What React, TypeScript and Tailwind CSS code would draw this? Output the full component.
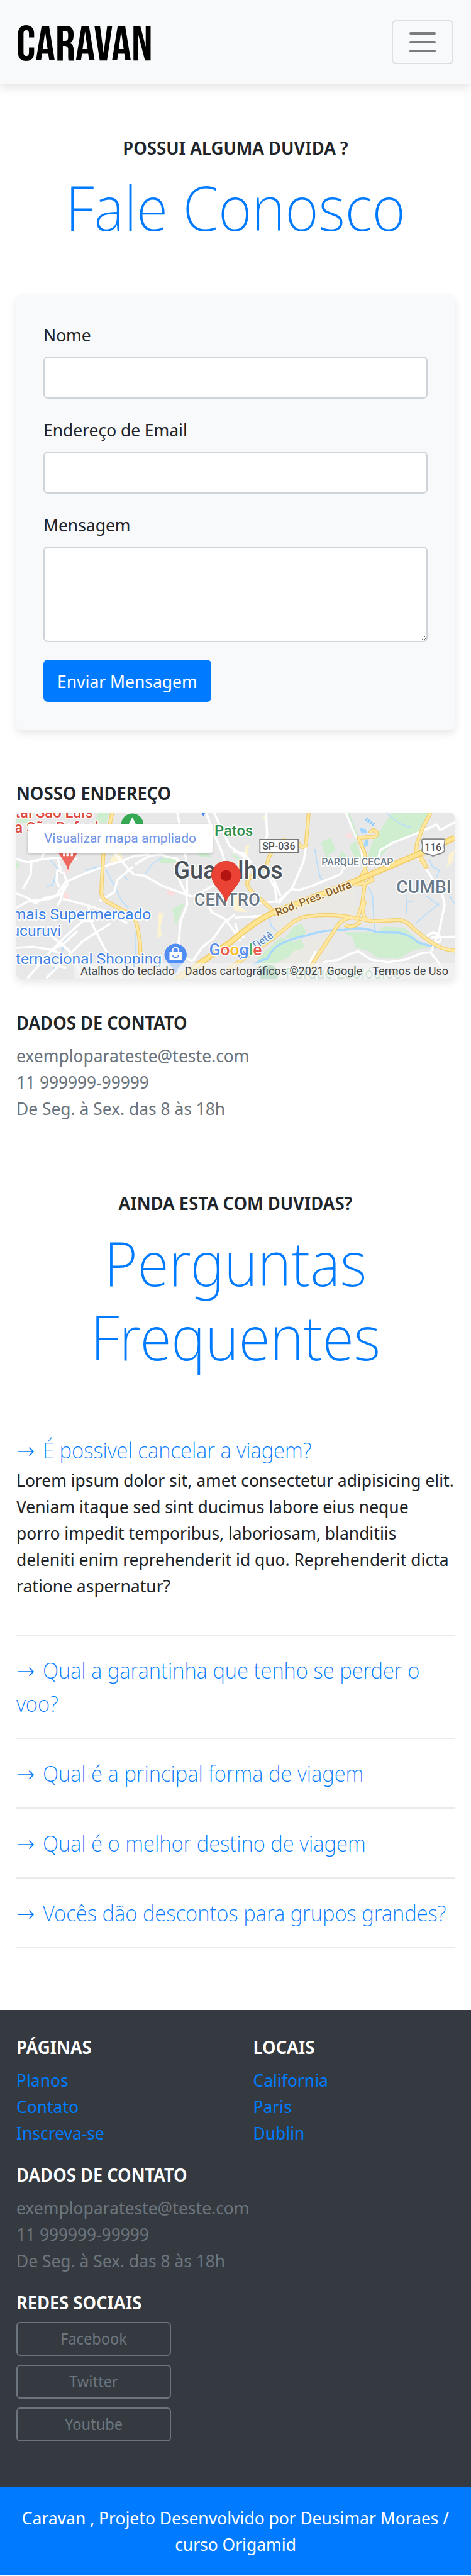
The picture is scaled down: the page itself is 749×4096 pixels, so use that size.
import { useState } from "react";

const contactLines = ["exemploparateste@teste.com", "11 999999-99999", "De Seg. à Sex. das 8 às 18h"];

const questions = [
  {
    title: "É possivel cancelar a viagem?",
    answer:
      "Lorem ipsum dolor sit, amet consectetur adipisicing elit. Veniam itaque sed sint ducimus labore eius neque porro impedit temporibus, laboriosam, blanditiis deleniti enim reprehenderit id quo. Reprehenderit dicta ratione aspernatur?",
  },
  { title: "Qual a garantinha que tenho se perder o voo?" },
  { title: "Qual é a principal forma de viagem" },
  { title: "Qual é o melhor destino de viagem" },
  { title: "Vocês dão descontos para grupos grandes?" },
];

const whiteRoads = [
  "M0 84 L20 90 L50 84 L74 82 L110 84",
  "M46 82 L50 72 M27 90 L26 112 L12 138",
  "M0 146 L20 154 L34 164 L52 154 L72 150 L88 126 L120 112 L156 98 L190 88 L214 78 L240 76",
  "M0 172 L22 160 L60 156 L82 146 L92 130 L86 110 L74 104 L72 124 L78 134",
  "M74 82 L80 104 M86 130 L80 158 L74 168",
  "M84 156 L130 168 L160 178 L200 200",
  "M130 168 L134 196 L156 240 L190 299",
  "M210 98 L182 122 L176 144 L150 160",
  "M176 72 L200 100 L212 112 L230 114 L262 132 L300 146 L318 152",
  "M214 94 L240 78 L262 76",
  "M200 0 L216 20 L244 66 L270 80 L292 84",
  "M290 84 L292 118 L306 148 L308 166 L296 196 L292 240 L300 262 L318 268",
  "M318 152 L362 128 M308 150 L306 84 L290 0",
  "M318 268 L334 244 L356 226 L374 200 L394 184",
  "M346 164 L352 180 L376 192 L394 216 L404 232",
  "M342 0 L352 30 L370 70 L382 110",
  "M356 0 L384 60 L410 80 L412 110",
  "M0 244 L30 242 L64 248 L120 272 L160 290",
  "M0 272 L30 270 L62 274 L90 280",
  "M20 299 L62 250 L90 222 L120 196 L140 196",
  "M54 299 L92 260 L120 232 L170 200",
  "M60 220 L96 250 L120 299 M110 214 L86 236 L64 248",
  "M450 0 L452 40 L448 60 M390 70 L410 74 L424 92",
  "M522 62 L518 88 L500 130 L496 138 L476 156 L474 166",
  "M496 138 L510 140 L534 132 L584 112 L590 100 L612 88",
  "M460 112 L476 150 M450 108 L466 136 L470 164 M416 166 L476 160 L496 138",
  "M394 190 L420 188 L462 186 M394 200 L402 224 L412 224",
  "M594 0 L606 30 L622 60 L624 92",
  "M790 18 L764 32 L758 22 L740 30 L722 38 L680 54 L656 68 L652 84",
  "M724 82 L744 110 L768 150 L772 166 L762 214 L748 250",
  "M748 226 L790 224 M740 224 q12 -14 24 0 q4 12 -12 12",
  "M552 270 L580 266 L600 256 L616 250 L640 266 L670 270 L700 266 L730 254 L746 252 L762 272 L776 299",
  "M528 272 L540 250",
];

const waterLines = [
  "M162 104 L180 140 L190 160 L202 172 M202 124 L192 112",
  "M66 126 L76 104 L60 84 M76 108 L66 130 L54 134",
  "M124 104 L150 98 L160 98 M232 112 L244 94 L262 82",
  "M214 216 L214 240 L216 260 M122 194 L90 220 L80 262 L56 299",
  "M538 66 L542 92 L548 118 L556 126 M634 134 L642 150 L644 190 L646 214",
  "M702 146 L704 184 M702 160 L716 160 M762 164 L720 200 M738 150 L762 168",
  "M744 84 L750 98 L762 104 L758 116",
  "M454 186 L460 206 L470 214 M666 0 L690 20 L712 28",
  "M780 150 L790 164",
];

const majorRoads = [
  "M173 0 L166 34 L157 71 L153 144 Q154 156 163 161 L197 179 Q214 188 217 201 L223 234 L225 299",
  "M527 0 L522 58 Q520 64 513 62 L507 54 M486 48 L480 50",
  "M460 72 Q452 84 452 98 Q430 106 418 122 Q412 130 424 142 L464 178",
  "M747 0 L733 27 L722 56 L720 74 Q734 82 738 98 L728 84",
  "M638 38 a6 6 0 1 1 4 6 L617 46 L628 74 L628 104 L642 122 L630 128 L610 130",
  "M628 104 L620 118 L628 130 L623 167 L613 196 M628 160 Q620 190 634 194",
  "M523 299 L533 274 L577 207 Q586 192 604 190 M592 203 q14 8 28 -6",
  "M380 284 L463 227 L500 197 Q516 187 533 187 Q560 183 590 187 L620 192 Q640 197 652 196 L690 194 Q704 196 713 207 Q730 222 743 231 Q766 248 790 249",
];

function MapDrawing() {
  return (
    <svg viewBox="0 0 790 300" preserveAspectRatio="xMidYMid slice" className="block h-full w-full" role="img" aria-label="Mapa de Guarulhos">
      <rect width="790" height="300" fill="#e8e8e8" />
      <path d="M463 200 L500 160 L606 130 L620 190 L520 190 L470 224z M440 290 L480 240 L560 222 L570 240 L540 299 L440 299z" fill="#ebe9e3" />
      <g fill="#ceeecf">
        <path d="M677 0 H746 L733 30 L723 36 L677 57 L652 84 L632 84 L643 50 L657 31z" />
        <path d="M549 54 L566 46 L576 68 L560 78 L580 82 L586 68 L598 84 L570 84 L558 80z" />
        <path d="M600 62 L612 52 L624 84 L612 84z" />
        <path d="M148 0 H168 L162 20 L140 20z" />
        <path d="M0 14 L20 10 L28 18 L0 20z M0 90 L6 94 L2 102 L0 102z" />
        <path d="M258 86 L270 80 L292 86 L290 92 L258 92z M326 74 L344 74 L352 80 L334 80z M384 72 L400 80 L410 92 L396 84z" />
        <path d="M281 174 L304 162 L288 204z" />
        <path d="M500 206 L514 200 L522 216 L516 226 L484 228z" />
        <path d="M590 216 L650 216 L662 206 L700 208 L726 232 L742 244 L716 248 L690 264 L650 262 L636 250 L612 244 L606 226z" />
        <path d="M436 262 L476 226 L500 234 L512 228 L520 244 L500 250 L490 262 L470 270 L462 290 L430 290z" />
      </g>
      <g fill="#fdf3d2">
        <path d="M176 74 L188 74 L194 88 L180 92 L168 90z M414 60 L420 58 L416 82 L408 82z M386 160 L398 150 L404 170 L416 180 L394 178z" />
        <path d="M256 182 L266 180 L260 206 L262 224 L254 226z M780 74 L790 68 L786 90 L776 98z M444 8 L450 4 L450 18z" />
      </g>
      <g fill="#fbdedd">
        <path d="M86 104 L98 102 L96 108 L88 110z M86 144 L96 148 L92 158 L84 154z M272 140 L286 142 L284 150 L270 148z M596 38 L606 36 L604 48 L594 44z" />
      </g>
      <path d="M618 28 L630 30 L632 38 L622 38z M628 50 L634 48 L634 60 L626 62z" fill="#a3d6ff" />
      <g fill="none" stroke="#b9defb" strokeWidth="2">
        {waterLines.map((d) => (
          <path key={d} d={d} />
        ))}
        <path d="M630 12 L646 24" stroke="#8ccbff" strokeWidth="6" strokeDasharray="3 2" />
      </g>
      <path d="M426 276 Q440 266 452 264 Q462 244 477 237 Q500 226 523 222 Q560 210 590 212 Q620 204 650 216 L690 217 Q712 222 723 234 L757 244" fill="none" stroke="#a8d8fe" strokeWidth="4" />
      <g fill="none" stroke="#fff" strokeWidth="4" strokeLinejoin="round">
        {whiteRoads.map((d) => (
          <path key={d} d={d} />
        ))}
      </g>
      <path d="M598 0 L612 36 L626 66" fill="none" stroke="#cdeccf" strokeWidth="3" />
      <g fill="none" strokeLinejoin="round">
        <g stroke="#f3cf73" strokeWidth="7">
          {majorRoads.map((d) => (
            <path key={d} d={d} />
          ))}
        </g>
        <g stroke="#ffe9a2" strokeWidth="4">
          {majorRoads.map((d) => (
            <path key={d} d={d} />
          ))}
        </g>
        <path d="M288 302 L390 231 Q430 196 463 181 L603 127 L723 76 L790 46" stroke="#f3cb66" strokeWidth="11" />
        <path d="M288 302 L390 231 Q430 196 463 181 L603 127 L723 76 L790 46" stroke="#ffe592" strokeWidth="7" />
      </g>

      <circle cx="209" cy="22" r="20" fill="#34a853" />
      <path d="M209 9 L220 30 H198z" fill="#fff" />
      <path d="M333 0 H341 L337 7z" fill="#4285f4" />
      <path d="M74 70 H112 L96 96 L93 104 L90 96z" fill="#ee675c" />
      <path d="M84 70 h4 v9 h-4z M90 70 h4 v9 h-4z M98 70 h4 v9 h-4z" fill="#fff" />
      <path d="M268 263 A20 20 0 1 1 306 263 Q300 274 292 280 L287 291 L282 280 Q274 274 268 263z" fill="#4f8df5" />
      <rect x="276" y="252" width="22" height="14" fill="#fff" />
      <path d="M282 252 v-4 a5 5 0 0 1 10 0 v4" fill="none" stroke="#fff" strokeWidth="2" />
      <path d="M282 257 a5 5 0 0 0 10 0" fill="none" stroke="#4f8df5" strokeWidth="2" />
      <circle cx="455" cy="292" r="17" fill="#5fae77" />

      <g fontFamily="Roboto, sans-serif" stroke="#fff" strokeWidth="4" strokeLinejoin="round" paintOrder="stroke">
        <g fontSize="27" fontWeight="500" fill="#dd4b42">
          <text x="138" y="10" textAnchor="end">Hospital São Luís</text>
          <text x="-3" y="37">a São Rafael</text>
        </g>
        <text x="357" y="42" fontSize="27" fontWeight="500" fill="#2f9150">Patos</text>
        <g fontSize="28" fill="#3b82e8">
          <text x="243" y="193" textAnchor="end">mais Supermercado</text>
          <text x="81" y="222" textAnchor="end">Tucuruvi</text>
          <text x="262" y="273" textAnchor="end">Internacional Shopping</text>
        </g>
        <text x="382" y="119" fontSize="43" fontWeight="500" fill="#4b5157" textAnchor="middle">Guarulhos</text>
        <g fontWeight="500" fill="#6a7988">
          <text x="380" y="168" fontSize="31" textAnchor="middle">CENTRO</text>
          <text x="685" y="146" fontSize="32">CUMBI</text>
          <text x="550" y="96" fontSize="18">PARQUE CECAP</text>
        </g>
        <text fontSize="20" fontWeight="500" fill="#8c5f2e" stroke="#fdf3d2" transform="translate(470 187) rotate(-21)">Rod. Pres. Dutra</text>
        <text fontSize="19" fill="#5b87c4" stroke="#e8f2fb" transform="translate(403 266) rotate(-34)">Rio Tietê</text>
        <text x="485" y="300" fontSize="27" fill="#6fb487">Parque Ecológico</text>
      </g>

      <rect x="439" y="49" width="69" height="23" fill="#fff" stroke="#777" strokeWidth="2" />
      <path d="M733 48 H770 Q773 48 772 54 Q770 62 772 68 Q770 74 762 75 Q756 76 751 79 Q746 76 740 75 Q732 74 731 68 Q733 62 731 54 Q730 48 733 48z" fill="#fff" stroke="#888" strokeWidth="2" />
      <g fontFamily="Roboto, sans-serif" fontSize="18" fontWeight="500" fill="#555" textAnchor="middle">
        <text x="473" y="67">SP-036</text>
        <text x="751" y="70">116</text>
      </g>

      <path d="M378 88 A26 26 0 0 1 404 114 C404 132 383 142 378 162 C373 142 352 132 352 114 A26 26 0 0 1 378 88z" fill="#ea4335" stroke="#d23a2d" strokeWidth="1" />
      <circle cx="378" cy="114" r="10" fill="#b31412" />
      <text x="395" y="258" fontFamily="Roboto, sans-serif" fontSize="30" fontWeight="500" textAnchor="middle" stroke="#fff" strokeWidth="3" paintOrder="stroke">
        <tspan fill="#5b8ff0">G</tspan>
        <tspan fill="#ea5a4e">o</tspan>
        <tspan fill="#f7c027">o</tspan>
        <tspan fill="#5b8ff0">g</tspan>
        <tspan fill="#4bb069">l</tspan>
        <tspan fill="#ea5a4e">e</tspan>
      </text>
    </svg>
  );
}

function Heading({ children }: { children: string }) {
  return <h2 className="mb-[14px] text-[29px] leading-[34px] font-semibold uppercase">{children}</h2>;
}

function ContactList() {
  return (
    <ul className="text-[28px] leading-[42px] text-[#6c757d]">
      {contactLines.map((line) => (
        <li key={line}>{line}</li>
      ))}
    </ul>
  );
}

function LinkList({ title, links }: { title: string; links: string[] }) {
  return (
    <div className="flex-1">
      <Heading>{title}</Heading>
      <ul className="text-[28px] leading-[42px] text-[#007bff]">
        {links.map((link) => (
          <li key={link}>
            <a href="#">{link}</a>
          </li>
        ))}
      </ul>
    </div>
  );
}

function PageTitle({ kicker, title }: { kicker: string; title: string }) {
  return (
    <div className="px-[26px] text-center">
      <p className="mb-[18px] text-[29px] leading-[34px] font-semibold">{kicker}</p>
      <h1 className="text-[97px] leading-[118px] font-extralight text-[#007bff]">{title}</h1>
    </div>
  );
}

const field = "block w-full rounded-[7px] border-2 border-[#ced4da] bg-white px-5 py-2";

export default function App() {
  const [open, setOpen] = useState(0);
  return (
    <div className="min-h-screen bg-white font-['Noto_Sans_Display','Open_Sans',sans-serif] text-[#212529]">
      <header className="flex items-center justify-between bg-[#f8f9fa] py-8 pr-7 pl-[26px] shadow-[0_6px_14px_rgba(0,0,0,0.1)]">
        <a href="#" className="pt-3 font-['Bebas_Neue','Open_Sans_Condensed','Open_Sans',sans-serif] text-[79px] leading-[58px] text-black">
          CARAVAN
        </a>
        <button type="button" aria-label="Abrir menu" className="flex h-[70px] w-[98px] items-center justify-center rounded-[7px] border-2 border-black/10">
          <svg width="42" height="32" viewBox="0 0 42 32" stroke="#7c7c7d" strokeWidth="4" strokeLinecap="round">
            <path d="M2 2H40M2 16H40M2 30H40" />
          </svg>
        </button>
      </header>

      <main>
        <section className="pt-[84px]">
          <PageTitle kicker="POSSUI ALGUMA DUVIDA ?" title="Fale Conosco" />
          <div className="mt-[81px] px-[26px]">
            <form className="rounded-[7px] bg-[#f8f9fa] px-[43px] pt-[42px] pb-[44px] shadow-[0_6px_14px_rgba(0,0,0,0.1)]" onSubmit={(e) => e.preventDefault()}>
              <div className="mb-7">
                <label htmlFor="nome" className="mb-[14px] block text-[28px] leading-[42px]">Nome</label>
                <input id="nome" type="text" className={field + " h-[67px]"} />
              </div>
              <div className="mb-7">
                <label htmlFor="email" className="mb-[14px] block text-[28px] leading-[42px]">Endereço de Email</label>
                <input id="email" type="email" className={field + " h-[67px]"} />
              </div>
              <div className="mb-7">
                <label htmlFor="mensagem" className="mb-[14px] block text-[28px] leading-[42px]">Mensagem</label>
                <textarea id="mensagem" className={field + " h-[152px]"} />
              </div>
              <button type="submit" className="h-[67px] rounded-[7px] bg-[#007bff] px-[22px] text-[28px] leading-[42px] text-white">
                Enviar Mensagem
              </button>
            </form>

            <div className="pt-[84px]">
              <Heading>Nosso Endereço</Heading>
              <div className="relative h-[264px] overflow-hidden rounded-[7px] shadow-[0_6px_14px_rgba(0,0,0,0.1)]">
                <MapDrawing />
                <a href="#" className="absolute top-[18px] left-[18px] rounded-[3px] bg-white px-[26px] text-[21px] leading-[46px] font-['Roboto',sans-serif] text-[#6f93e6] shadow-[0_2px_4px_rgba(0,0,0,0.2)]">
                  Visualizar mapa ampliado
                </a>
                <div className="absolute right-0 bottom-0 flex gap-4 bg-[#f5f5f5]/70 px-[10px] text-[18px] leading-[25px] font-['Roboto',sans-serif] text-[#444]">
                  <button type="button">Atalhos do teclado</button>
                  <span>Dados cartográficos ©2021 Google</span>
                  <a href="#">Termos de Uso</a>
                </div>
              </div>
            </div>

            <div className="pt-[53px]">
              <Heading>Dados de Contato</Heading>
              <ContactList />
            </div>
          </div>
        </section>

        <section className="pt-[113px] pb-[98px]">
          <PageTitle kicker="AINDA ESTA COM DUVIDAS?" title="Perguntas Frequentes" />
          <div className="mt-[67px] px-[26px]">
            {questions.map((q, i) => (
              <div key={q.title} className="border-b-2 border-[#e9ecef] py-7">
                <button type="button" aria-expanded={open === i} onClick={() => setOpen(i)} className="block w-full text-left text-[35px] leading-[53px] font-extralight text-[#007bff]">
                  <span className="mr-1 font-['DejaVu_Sans',sans-serif] leading-none">→</span> {q.title}
                </button>
                {open === i && q.answer && <p className="pb-[29px] text-[28px] leading-[42px]">{q.answer}</p>}
              </div>
            ))}
          </div>
        </section>
      </main>

      <footer>
        <div className="flex flex-col gap-[29px] bg-[#343a40] px-[26px] pt-[42px] pb-[72px] text-white">
          <div className="flex gap-14">
            <LinkList title="Páginas" links={["Planos", "Contato", "Inscreva-se"]} />
            <LinkList title="Locais" links={["California", "Paris", "Dublin"]} />
          </div>
          <div>
            <Heading>Dados de Contato</Heading>
            <ContactList />
          </div>
          <div>
            <Heading>Redes Sociais</Heading>
            <div className="flex w-[246px] flex-col gap-[14px]">
              {["Facebook", "Twitter", "Youtube"].map((name) => (
                <a key={name} href="#" className="flex h-[54px] items-center justify-center rounded-[6px] border-2 border-[#6c757d] text-[25px] text-[#6c757d]">
                  {name}
                </a>
              ))}
            </div>
          </div>
        </div>
        <p className="bg-[#007bff] px-[26px] pt-7 pb-[29px] text-center text-[28px] leading-[42px] text-white">
          Caravan , Projeto Desenvolvido por Deusimar Moraes / curso Origamid
        </p>
      </footer>
    </div>
  );
}
